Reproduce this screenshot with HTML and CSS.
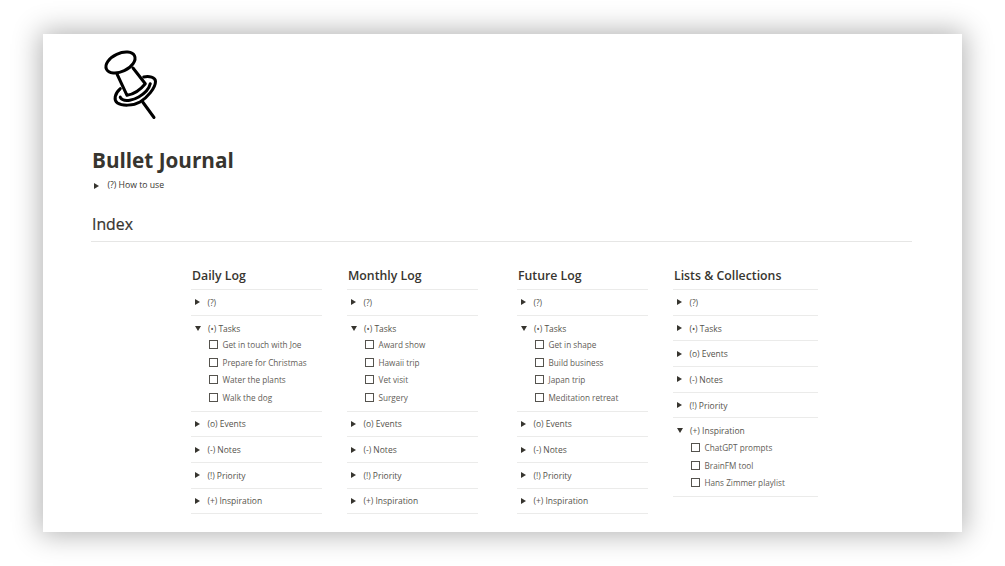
FILE: index.html
```html
<!DOCTYPE html>
<html lang="en">
<head>
<meta charset="utf-8">
<title>Bullet Journal</title>
<link rel="stylesheet" href="styles.css">
</head>
<body>
<main class="card">
  <div class="page-icon">
    <svg width="60" height="74" viewBox="0 0 60 74" fill="none" stroke="#000" stroke-width="3" stroke-linecap="round" stroke-linejoin="round">
      <ellipse cx="20.500" cy="14.500" rx="15.500" ry="9" transform="rotate(-25 20.500 14.500)"/>
      <path d="M17 26 L27 47.300 C35 46 41 41 45.300 35.700 L33 20"/>
      <path d="M43.700 29 C49 28 55.500 29 55.500 33.500 C55.500 40 47 50 40 54 C33 58 22 58 17.500 55 C13.500 52 14.500 46 20.300 40.700"/>
      <path d="M50.300 35.700 C49 41 44 46 38.700 49 C33 52.300 26 53.500 22.500 51.500 C20.800 50.500 20 49.500 20.300 49"/>
      <path d="M42.700 54 L54 69.500"/>
    </svg>
  </div>
  <h1 class="title">Bullet Journal</h1>
  <div class="toggle how"><span class="tri right"></span>(?) How to use</div>
  <h2 class="index">Index</h2>
  <div class="columns">
    <section class="col">
      <h3>Daily Log</h3>
      <div class="row"><div class="toggle"><span class="tri right"></span>(?)</div></div>
      <div class="row open"><div class="toggle"><span class="tri down"></span>(•) Tasks</div>
        <div class="check"><span class="box"></span>Get in touch with Joe</div>
        <div class="check"><span class="box"></span>Prepare for Christmas</div>
        <div class="check"><span class="box"></span>Water the plants</div>
        <div class="check"><span class="box"></span>Walk the dog</div>
      </div>
      <div class="row"><div class="toggle"><span class="tri right"></span>(o) Events</div></div>
      <div class="row"><div class="toggle"><span class="tri right"></span>(-) Notes</div></div>
      <div class="row"><div class="toggle"><span class="tri right"></span>(!) Priority</div></div>
      <div class="row"><div class="toggle"><span class="tri right"></span>(+) Inspiration</div></div>
    </section>
    <section class="col">
      <h3>Monthly Log</h3>
      <div class="row"><div class="toggle"><span class="tri right"></span>(?)</div></div>
      <div class="row open"><div class="toggle"><span class="tri down"></span>(•) Tasks</div>
        <div class="check"><span class="box"></span>Award show</div>
        <div class="check"><span class="box"></span>Hawaii trip</div>
        <div class="check"><span class="box"></span>Vet visit</div>
        <div class="check"><span class="box"></span>Surgery</div>
      </div>
      <div class="row"><div class="toggle"><span class="tri right"></span>(o) Events</div></div>
      <div class="row"><div class="toggle"><span class="tri right"></span>(-) Notes</div></div>
      <div class="row"><div class="toggle"><span class="tri right"></span>(!) Priority</div></div>
      <div class="row"><div class="toggle"><span class="tri right"></span>(+) Inspiration</div></div>
    </section>
    <section class="col col-future">
      <h3>Future Log</h3>
      <div class="row"><div class="toggle"><span class="tri right"></span>(?)</div></div>
      <div class="row open"><div class="toggle"><span class="tri down"></span>(•) Tasks</div>
        <div class="check"><span class="box"></span>Get in shape</div>
        <div class="check"><span class="box"></span>Build business</div>
        <div class="check"><span class="box"></span>Japan trip</div>
        <div class="check"><span class="box"></span>Meditation retreat</div>
      </div>
      <div class="row"><div class="toggle"><span class="tri right"></span>(o) Events</div></div>
      <div class="row"><div class="toggle"><span class="tri right"></span>(-) Notes</div></div>
      <div class="row"><div class="toggle"><span class="tri right"></span>(!) Priority</div></div>
      <div class="row"><div class="toggle"><span class="tri right"></span>(+) Inspiration</div></div>
    </section>
    <section class="col col-lists">
      <h3>Lists &amp; Collections</h3>
      <div class="row"><div class="toggle"><span class="tri right"></span>(?)</div></div>
      <div class="row"><div class="toggle"><span class="tri right"></span>(•) Tasks</div></div>
      <div class="row"><div class="toggle"><span class="tri right"></span>(o) Events</div></div>
      <div class="row"><div class="toggle"><span class="tri right"></span>(-) Notes</div></div>
      <div class="row"><div class="toggle"><span class="tri right"></span>(!) Priority</div></div>
      <div class="row open"><div class="toggle"><span class="tri down"></span>(+) Inspiration</div>
        <div class="check"><span class="box"></span>ChatGPT prompts</div>
        <div class="check"><span class="box"></span>BrainFM tool</div>
        <div class="check"><span class="box"></span>Hans Zimmer playlist</div>
      </div>
    </section>
  </div>
</main>
</body>
</html>
```
FILE: styles.css
```css
* { box-sizing: border-box; }
html, body { margin: 0; height: 100%; }
body {
  width: 1005px;
  height: 566px;
  overflow: hidden;
  background: #fff;
  padding: 34px 43px;
  font-family: "Open Sans", "Noto Sans", sans-serif;
  color: #37352f;
}
.card {
  width: 919px;
  height: 498px;
  background: #fff;
  box-shadow: 0 0 26px 3px rgba(0, 0, 0, 0.3);
  padding: 14px 50px 0 48px;
}
.page-icon { height: 74px; margin-left: 9px; }
.page-icon svg { display: block; }
.title {
  margin: 23.5px 0 0 1px;
  font-size: 20.7px;
  line-height: 28px;
  font-weight: 700;
}
.toggle {
  display: flex;
  align-items: center;
  font-size: 8.5px;
  line-height: 13px;
  color: #55534d;
}
.how { margin: 5.5px 0 0 3px; font-size: 8.7px; color: #37352f; }
.tri { display: block; flex: none; width: 0; height: 0; }
.tri.right {
  border-left: 5.6px solid #37352f;
  border-top: 3px solid transparent;
  border-bottom: 3px solid transparent;
  margin-right: 7.4px;
}
.tri.down {
  border-top: 5.6px solid #37352f;
  border-left: 3px solid transparent;
  border-right: 3px solid transparent;
  margin-right: 7px;
}
.how .tri.right { margin-right: 8.4px; }
.index {
  margin: 21px 0 0 0;
  padding: 0 0 5px 1px;
  font-size: 15.8px;
  line-height: 23px;
  font-weight: 400;
  color: #37352f;
  border-bottom: 1px solid #e6e6e5;
  -webkit-text-stroke: 0.2px #37352f;
}
.columns {
  display: flex;
  gap: 25px;
  margin: 24px 0 0 100px;
}
.col { width: 131px; flex: none; }
.col-future { margin-left: 14px; }
.col-lists { width: 145px; }
.col h3 {
  margin: 0;
  padding: 0 0 4px 1px;
  height: 24px;
  font-size: 12.3px;
  line-height: 19px;
  font-weight: 600;
  border-bottom: 1px solid #ebebea;
}
.row {
  padding: 5.85px 0 5.85px 4px;
  border-bottom: 1px solid #ebebea;
}
.row.open { padding-bottom: 4.5px; }
.check {
  display: flex;
  align-items: center;
  height: 17.5px;
  padding-left: 14px;
  font-size: 8.2px;
  color: #5f5d57;
}
.row .toggle + .check { margin-top: 1.5px; }
.box {
  width: 9px;
  height: 9px;
  border: 1px solid #55534e;
  margin-right: 4.5px;
  flex: none;
}
```
